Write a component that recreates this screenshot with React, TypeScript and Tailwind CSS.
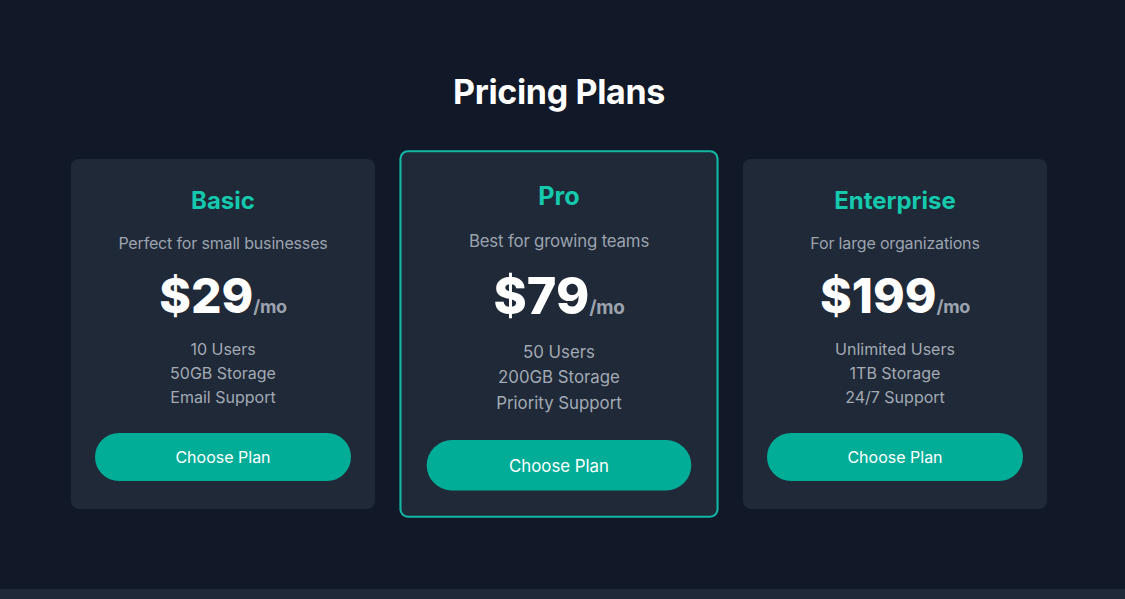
const plans = [
    { name: 'Basic', desc: 'Perfect for small businesses', price: '$29', features: ['10 Users', '50GB Storage', 'Email Support'], featured: false },
    { name: 'Pro', desc: 'Best for growing teams', price: '$79', features: ['50 Users', '200GB Storage', 'Priority Support'], featured: true },
    { name: 'Enterprise', desc: 'For large organizations', price: '$199', features: ['Unlimited Users', '1TB Storage', '24/7 Support'], featured: false },
];

const PlanCard = ({ plan }: { plan: (typeof plans)[number] }) => (
    <div
        className={`flex flex-col items-center rounded-lg bg-[#1f2937] px-6 text-center ${plan.featured ? 'scale-105 border-2 border-[#14b8a6] pt-[26px] pb-6' : 'pt-[26px] pb-[28px]'
            }`}
    >
        <h2 className="text-2xl font-bold text-[#14c9ad]">{plan.name}</h2>
        <p className="mt-[14px] text-base tracking-[-0.01em] text-[#9ca3af]">{plan.desc}</p>
        <div className="mt-[17px] flex items-baseline">
            <span className="text-5xl leading-none font-extrabold text-white">{plan.price}</span>
            <span className="text-lg font-bold tracking-[-0.02em] text-[#9ca3af]">/mo</span>
        </div>
        <ul className="mt-4 text-base leading-6 text-[#a3aab5]">
            {plan.features.map((f) => (
                <li key={f}>{f}</li>
            ))}
        </ul>
        <button className="mt-6 w-full rounded-full bg-[#02ad98] py-3 text-base font-normal text-white">
            Choose Plan
        </button>
    </div>
);

export default function App() {
    return (
        <div className="min-h-screen bg-[#1f2937] font-['Inter',sans-serif]">
            <div className="h-[589px] bg-[#111827] pr-[7px]">
                <div className="mx-auto max-w-5xl px-6 pt-[72px]">
                    <h1 className="text-center text-[34px] leading-10 font-bold tracking-[-0.01em] text-white">Pricing Plans</h1>
                    <div className="mt-[47px] grid grid-cols-3 items-center gap-8">
                        {plans.map((p) => (
                            <PlanCard key={p.name} plan={p} />
                        ))}
                    </div>
                </div>
            </div>
        </div>
    );
}
